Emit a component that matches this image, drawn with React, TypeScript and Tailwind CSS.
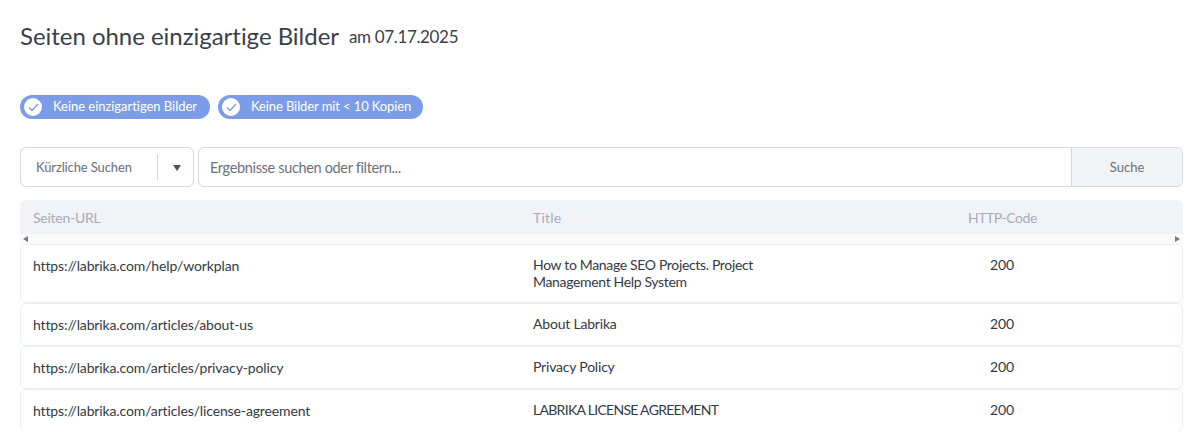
const rows = [
  { url: "https://labrika.com/help/workplan", urlT: "tracking-[-0.13px]", title: [{ t: "How to Manage SEO Projects. Project", c: "tracking-[-0.34px]" }, { t: "Management Help System", c: "tracking-[-0.34px]" }], h: "h-[59px]" },
  { url: "https://labrika.com/articles/about-us", urlT: "tracking-[-0.13px]", title: [{ t: "About Labrika", c: "tracking-[-0.2px]" }], h: "h-[43px]" },
  { url: "https://labrika.com/articles/privacy-policy", urlT: "tracking-[-0.13px]", title: [{ t: "Privacy Policy", c: "tracking-[-0.2px]" }], h: "h-[43px]" },
  { url: "https://labrika.com/articles/license-agreement", urlT: "tracking-[-0.13px]", title: [{ t: "LABRIKA LICENSE AGREEMENT", c: "tracking-[-0.7px]" }], h: "h-[43px]" },
];

function Check() {
  return (
    <span className="flex h-[18px] w-[18px] items-center justify-center rounded-full bg-white">
      <svg width="11" height="9" viewBox="0 0 11 9" fill="none">
        <path d="M1 4.5 L4 7.5 L10 1" stroke="#7b9ce8" strokeWidth="1.3" />
      </svg>
    </span>
  );
}

function Pill({ text, w, c }: { text: string; w: string; c: string }) {
  return (
    <div className={`flex h-6 items-center rounded-full bg-[#7c9ce8] pl-[4px] text-[13px] text-white ${w}`}>
      <Check />
      <span className={`ml-[11px] whitespace-nowrap ${c}`}>{text}</span>
    </div>
  );
}

export default function App() {
  return (
    <div className="h-[431px] w-[1196px] overflow-hidden bg-white pl-5 pr-[13px] font-['Lato',sans-serif] text-[#333a45]">
      <div className="flex h-[95px] items-start pt-[20px]">
        <h1 className="text-[24px] leading-[32px] tracking-[-0.03px] text-[#3a3f47]">Seiten ohne einzigartige Bilder</h1>
        <span className="ml-[10px] pt-[5px] text-[17px] leading-[24px] tracking-[-0.35px] text-[#3a3f47]">am 07.17.2025</span>
      </div>
      <div className="flex gap-2">
        <Pill text="Keine einzigartigen Bilder" w="w-[190px]" c="tracking-[-0.04px]" />
        <Pill text="Keine Bilder mit < 10 Kopien" w="w-[205px]" c="tracking-[-0.1px]" />
      </div>
      <div className="mt-7 flex h-10 gap-1">
        <div className="flex w-[174px] items-center rounded-md border border-[#d5d7e0] pl-[15px] text-[13px] text-[#6b7078]">
          <span className="w-[121px] pt-px tracking-[-0.12px]">Kürzliche Suchen</span>
          <span className="h-[26px] w-px bg-[#d5d7e0]" />
          <span className="ml-[15px] mt-[2px] h-0 w-0 border-x-[4px] border-t-[6px] border-x-transparent border-t-[#4b5563]" />
        </div>
        <div className="flex flex-1 rounded-md border border-[#d5d7e0]">
          <div className="flex flex-1 items-center pl-[11px] pt-[2px] text-[14.5px] tracking-[-0.34px] text-[#6b7078]">Ergebnisse suchen oder filtern...</div>
          <div className="flex w-[111px] items-center justify-center rounded-r-md border-l border-[#d5d7e0] bg-[#f2f3f5] pt-px text-[13px] text-[#6b7078]">Suche</div>
        </div>
      </div>
      <div className="mt-[13px] rounded-t-md">
        <div className="grid h-[34px] grid-cols-[500px_435px_1fr] items-center rounded-t-md bg-[#f2f3f6] pl-[13px] text-[14px] text-[#a5abbd]">
          <span className="tracking-[-0.25px]">Seiten-URL</span>
          <span className="tracking-[0.2px]">Title</span>
          <span className="tracking-[-0.45px]">HTTP-Code</span>
        </div>
        <div className="flex h-[10px] items-center justify-between bg-[#fafafa] px-[3px]">
          <span className="h-0 w-0 border-y-[3.5px] border-r-[5px] border-y-transparent border-r-[#777]" />
          <span className="h-0 w-0 border-y-[3.5px] border-l-[5px] border-y-transparent border-l-[#777]" />
        </div>
        {rows.map((r) => (
          <div key={r.url} className={`grid grid-cols-[500px_457px_1fr] rounded-md border border-[#eceef6] pl-[12px] pt-[12px] text-[14px] leading-[17px] text-[#333a45] ${r.h}`}>
            <span className={`whitespace-nowrap ${r.urlT}`}>{r.url}</span>
            <span className="-mt-px">
              {r.title.map((t) => (
                <div key={t.t} className={`whitespace-nowrap ${t.c}`}>{t.t}</div>
              ))}
            </span>
            <span className="-mt-px tracking-[-0.1px]">200</span>
          </div>
        ))}
      </div>
    </div>
  );
}
